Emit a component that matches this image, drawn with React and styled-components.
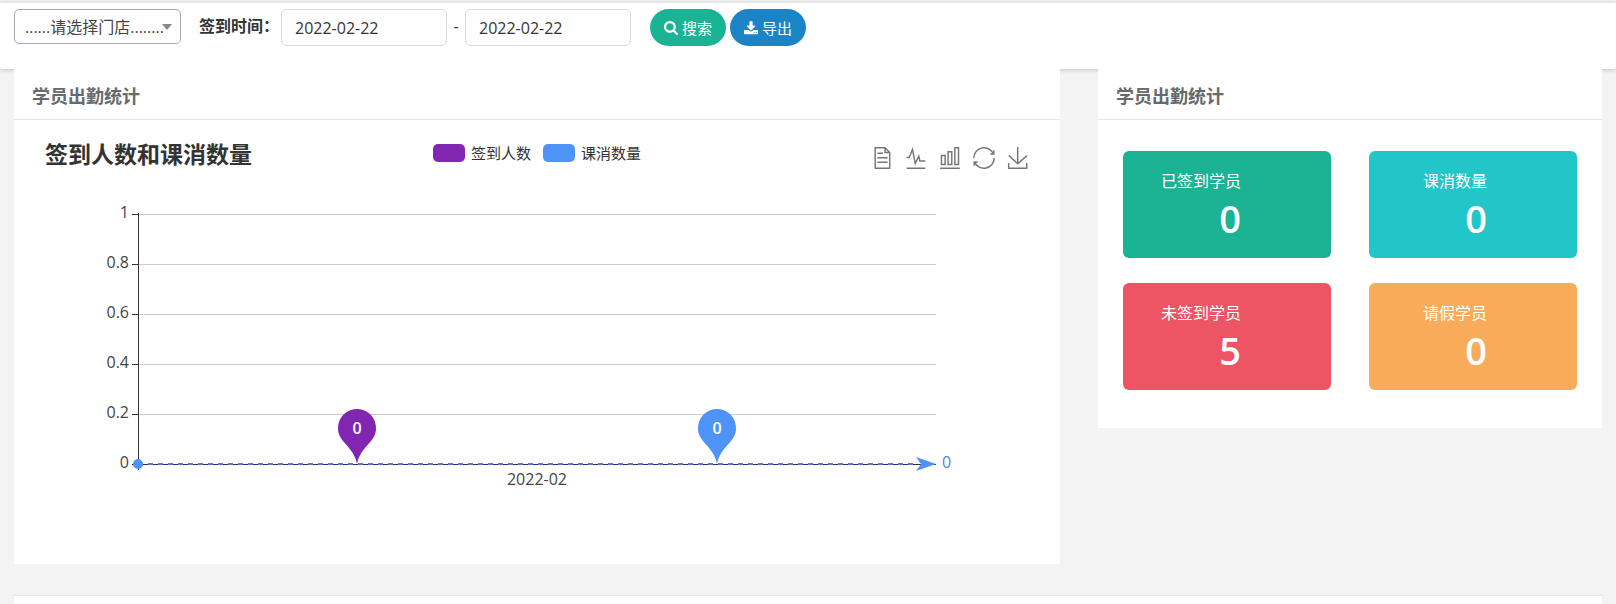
import React from "react";
import styled, { createGlobalStyle } from "styled-components";

const GlobalStyle = createGlobalStyle`
  *, *::before, *::after { box-sizing: border-box; }
  body {
    margin: 0;
    background: #f3f3f3;
    color: #333;
    font: 16px/24px "Open Sans", "Noto Sans CJK SC", sans-serif;
  }
  button, input, select { font: inherit; color: inherit; }
  h2, h3, p { margin: 0; }
`;

const Page = styled.div`
  display: flex;
  flex-direction: column;
  min-height: 100vh;
`;

const Toolbar = styled.form`
  display: flex;
  align-items: flex-start;
  margin-top: 2px;
  padding: 6px 14px 23px;
  background: #fff;
  border-top: 1px solid #e7e7e7;
  border-radius: 2px;
  box-shadow: 0 1px 4px rgba(0, 0, 0, 0.2);
`;

const SelectWrap = styled.div`
  position: relative;
  width: 167px;
  margin-right: 18px;
  &::after {
    content: "";
    position: absolute;
    top: 15px;
    right: 9px;
    border: 5px solid transparent;
    border-top: 6px solid #888;
    border-bottom: 0;
    pointer-events: none;
  }
`;

const Select = styled.select`
  display: block;
  width: 100%;
  height: 35px;
  padding: 0 0 0 10px;
  color: #444;
  background: #fff;
  border: 1px solid #aaa;
  border-radius: 5px;
  appearance: none;
`;

const FieldLabel = styled.label`
  width: 82px;
  padding-top: 5px;
  font-weight: 600;
  white-space: nowrap;
`;

const DateInput = styled.input`
  width: 166px;
  height: 37px;
  padding: 0 13px;
  background: #fff;
  border: 1px solid #ddd;
  border-radius: 5px;
`;

const Dash = styled.span`
  width: 18px;
  padding-top: 5px;
  text-align: center;
`;

const Actions = styled.div`
  display: flex;
  gap: 4px;
  margin-left: 19px;
`;

const ActionButton = styled.button`
  display: flex;
  align-items: center;
  gap: 4px;
  height: 37px;
  padding: 0 14px;
  color: #fff;
  font-size: 15px;
  background: ${(p) => p.$color};
  border: 0;
  border-radius: 19px;
  cursor: pointer;
  svg { width: 14px; height: 14px; fill: currentColor; }
`;

const Main = styled.main`
  position: relative;
  display: grid;
  grid-template-columns: repeat(12, minmax(0, 1fr));
  column-gap: 38px;
  align-items: start;
  padding: 0 14px;
`;

const Panel = styled.section`
  grid-column: span ${(p) => p.$span};
  background: #fff;
`;

const PanelTitle = styled.h3`
  height: 51px;
  padding: 15px 18px 0;
  color: #676a6c;
  font-size: 18px;
  font-weight: 600;
  border-bottom: 1px solid #e7e7e7;
`;

const ChartHead = styled.div`
  display: grid;
  grid-template-columns: 1fr auto 1fr;
  align-items: start;
  height: 70px;
  padding: 0 31px;
`;

const ChartTitle = styled.h2`
  padding-top: 18px;
  font-size: 23px;
  line-height: 32px;
`;

const Legend = styled.div`
  display: flex;
  gap: 12px;
  padding-top: 22px;
`;

const LegendItem = styled.button`
  display: flex;
  align-items: center;
  gap: 6px;
  padding: 0;
  font-size: 15px;
  line-height: 22px;
  background: none;
  border: 0;
  cursor: pointer;
  &::before {
    content: "";
    width: 32px;
    height: 18px;
    background: ${(p) => p.$color};
    border-radius: 5px;
  }
`;

const Toolbox = styled.div`
  display: flex;
  justify-content: flex-end;
  gap: 12px;
  padding-top: 27px;
`;

const ToolButton = styled.button`
  width: 22px;
  height: 22px;
  padding: 0;
  background: none;
  border: 0;
  cursor: pointer;
  svg {
    display: block;
    width: 22px;
    height: 22px;
    fill: none;
    stroke: #777;
    stroke-width: 4;
    overflow: visible;
  }
`;

const Plot = styled.svg`
  display: block;
  width: 100%;
  height: auto;
  font-size: 16px;
`;

const Cards = styled.div`
  display: grid;
  grid-template-columns: 1fr 1fr;
  gap: 25px 38px;
  padding: 31px 25px 38px;
`;

const Card = styled.div`
  height: 107px;
  padding: 18px 90px 0 0;
  color: #fff;
  text-align: right;
  white-space: nowrap;
  background: ${(p) => p.$color};
  border-radius: 6px;
`;

const CardValue = styled.p`
  font-size: 38px;
  font-weight: 600;
  line-height: 50px;
`;

const NextPanel = styled.section`
  flex: 1;
  margin: 31px 14px 0;
  background: #fff;
  border-top: 1px solid #e7e7e7;
`;

const PURPLE = "#8226b2";
const BLUE = "#4e94f8";

const TOOLS = [
  ["数据视图", "M17.5,17.3H33M45.4,29.5h-28M11.5,2v56H51V14.8L38.4,2H11.5zM38.4,2.2v12.7H51M45.4,41.7h-28"],
  ["切换为折线图", "M4.1,28.9h7.1l9.3-22l7.4,38l9.7-19.7l3,12.8h14.9M4.1,58h51.4"],
  ["切换为柱状图", "M6.7,22.9h10V48h-10V22.9zM24.9,13h10v35h-10V13zM43.2,2h10v46h-10V2zM3.1,58h53.7"],
  ["还原", "M47,18.9h9.8V8.7M56.3,20.1C52.1,9,40.5,0.6,26.8,2.1C12.6,3.7,1.6,16.2,2.1,30.6M13,41.1H3.1v10.2M3.7,39.9c4.2,11.1,15.8,19.5,29.5,18c14.2-1.6,25.2-14.1,24.7-28.5"],
  ["保存为图片", "M4.7,22.9L29.3,45.5L54.7,23.4M4.6,43.6L4.6,58L53.8,58L53.8,43.6M29.2,45.1L29.2,0"],
];

const STATS = [
  ["已签到学员", 0, "#1cb394"],
  ["课消数量", 0, "#23c6c8"],
  ["未签到学员", 5, "#ed5565"],
  ["请假学员", 0, "#f8ac59"],
];

const SearchIcon = () => (
  <svg viewBox="64 128 1664 1664" aria-hidden="true">
    <path d="M1216 832q0-185-131.5-316.5t-316.5-131.5-316.5 131.5-131.5 316.5 131.5 316.5 316.5 131.5 316.5-131.5 131.5-316.5zm512 832q0 52-38 90t-90 38q-54 0-90-38l-343-342q-179 124-399 124-143 0-273.5-55.5t-225-150-150-225-55.5-273.5 55.5-273.5 150-225 225-150 273.5-55.5 273.5 55.5 225 150 150 225 55.5 273.5q0 220-124 399l343 343q37 37 37 90z" />
  </svg>
);

const DownloadIcon = () => (
  <svg viewBox="0 0 1664 1600" aria-hidden="true">
    <path d="M1280 1344q0-26-19-45t-45-19-45 19-19 45 19 45 45 19 45-19 19-45zm256 0q0-26-19-45t-45-19-45 19-19 45 19 45 45 19 45-19 19-45zm128-224v320q0 40-28 68t-68 28h-1472q-40 0-68-28t-28-68v-320q0-40 28-68t68-28h465l135 136q58 56 136 56t136-56l136-136h464q40 0 68 28t28 68zm-325-569q17 41-14 70l-448 448q-18 19-45 19t-45-19l-448-448q-31-29-14-70 17-39 59-39h256v-448q0-26 19-45t45-19h256q26 0 45 19t19 45v448h256q42 0 59 39z" />
  </svg>
);

const Pin = ({ x, color, value }) => (
  <g transform={`translate(${x} 238)`}>
    <path
      fill={color}
      d="M-15.5 11A19 19 0 1 1 15.5 11C11 17.500 2 24 0 36C-2 24-11 17.500-15.500 11Z"
    />
    <text y="6" textAnchor="middle" fill="#fff" fontWeight="600">{value}</text>
  </g>
);

const TICKS = ["1", "0.8", "0.6", "0.4", "0.2", "0"];

function AttendancePlot() {
  return (
    <Plot viewBox="0 0 1046 374" role="img" aria-label="签到人数和课消数量">
      {TICKS.map((tick, i) => {
        const y = 24 + i * 50;
        const last = i === TICKS.length - 1;
        return (
          <g key={tick}>
            <path d={`M124 ${y + 0.5}H922`} stroke={last ? "#333" : "#ccc"} shapeRendering="crispEdges" />
            <path d={`M118 ${y + 0.5}H124`} stroke="#333" shapeRendering="crispEdges" />
            <text x="115" y={y + 4} textAnchor="end" fill="#444">{tick}</text>
          </g>
        );
      })}
      <path d="M124.500 23V280" stroke="#333" shapeRendering="crispEdges" />
      <text x="523" y="295" textAnchor="middle" fill="#444">2022-02</text>
      <path d="M124 274H904" stroke={BLUE} strokeWidth="2" strokeDasharray="5 5" />
      <path d="M124 274H904" stroke={PURPLE} strokeWidth="2" strokeOpacity="0.3" strokeDasharray="5 5" />
      <circle cx="124" cy="274" r="5" fill={BLUE} />
      <path d="M922 274L902 267L907 274L902 281Z" fill={BLUE} />
      <text x="928" y="278" fill="#5580e8">0</text>
      <Pin x={343} color={PURPLE} value="0" />
      <Pin x={703} color={BLUE} value="0" />
    </Plot>
  );
}

export default function App() {
  return (
    <Page>
      <GlobalStyle />
      <Toolbar onSubmit={(e) => e.preventDefault()}>
        <SelectWrap>
          <Select aria-label="门店">
            <option>......请选择门店........</option>
          </Select>
        </SelectWrap>
        <FieldLabel htmlFor="start">签到时间：</FieldLabel>
        <DateInput id="start" defaultValue="2022-02-22" />
        <Dash>-</Dash>
        <DateInput aria-label="结束时间" defaultValue="2022-02-22" />
        <Actions>
          <ActionButton $color="#1cb394"><SearchIcon />搜索</ActionButton>
          <ActionButton type="button" $color="#1c84c6"><DownloadIcon />导出</ActionButton>
        </Actions>
      </Toolbar>
      <Main>
        <Panel $span={8}>
          <PanelTitle>学员出勤统计</PanelTitle>
          <ChartHead>
            <ChartTitle>签到人数和课消数量</ChartTitle>
            <Legend>
              <LegendItem $color={PURPLE}>签到人数</LegendItem>
              <LegendItem $color={BLUE}>课消数量</LegendItem>
            </Legend>
            <Toolbox>
              {TOOLS.map(([name, d]) => (
                <ToolButton key={name} aria-label={name}>
                  <svg viewBox="0 0 60 60"><path d={d} /></svg>
                </ToolButton>
              ))}
            </Toolbox>
          </ChartHead>
          <AttendancePlot />
        </Panel>
        <Panel $span={4}>
          <PanelTitle>学员出勤统计</PanelTitle>
          <Cards>
            {STATS.map(([name, value, color]) => (
              <Card key={name} $color={color}>
                <p>{name}</p>
                <CardValue>{value}</CardValue>
              </Card>
            ))}
          </Cards>
        </Panel>
      </Main>
      <NextPanel />
    </Page>
  );
}
